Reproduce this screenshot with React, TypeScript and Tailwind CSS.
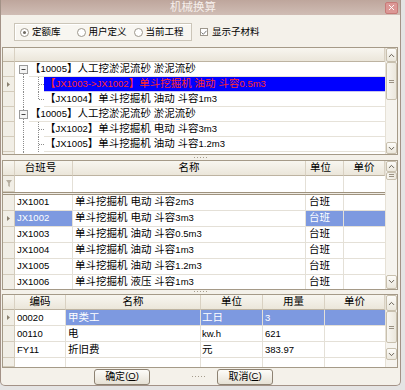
import { ChevronDown, ChevronUp, X } from 'lucide-react';

const sel = 'bg-[#7d99e0] text-white';
const cellLine = 'border-r border-b border-[#e4e0d7]';

// Latin runs are drawn a little smaller than the CJK ones, like the Tahoma + SimSun mix of the original
function T({ s }: { s: string }) {
  const parts = s.split(/([\x21-\x7e]+)/);
  return (
    <>
      {parts.map((p, i) =>
        /^[\x21-\x7e]+$/.test(p) ? (
          <span key={i} className="text-[9.5px]">
            {p}
          </span>
        ) : (
          p
        ),
      )}
    </>
  );
}

function Arrow({ dir, className }: { dir: 'up' | 'down'; className: string }) {
  return (
    <div
      className={`flex shrink-0 items-center justify-center rounded-[2px] border border-[#c8c0ae] bg-linear-to-b from-[#fdfcf9] to-[#ebe7dc] ${className}`}
    >
      {dir === 'up' ? (
        <ChevronUp size={9} strokeWidth={2.5} className="text-[#5e574c]" />
      ) : (
        <ChevronDown size={9} strokeWidth={2.5} className="text-[#5e574c]" />
      )}
    </div>
  );
}

function ScrollBar({ up, thumb, down }: { up: string; thumb: string; down: string }) {
  return (
    <div className="flex w-[12px] shrink-0 flex-col border-l border-[#e6e1d6] bg-[#f6f4ef]">
      <Arrow dir="up" className={up} />
      <div
        className={`flex shrink-0 flex-col items-center justify-center gap-[1px] rounded-[2px] border border-[#c8c0ae] bg-linear-to-r from-[#f8f6f1] to-[#ebe7dc] ${thumb}`}
      >
        <span className="h-px w-[5px] bg-[#9a9182]" />
        <span className="h-px w-[5px] bg-[#9a9182]" />
      </div>
      <div className="flex-1" />
      <Arrow dir="down" className={down} />
    </div>
  );
}

function Indicator({ mark, filter, className = 'h-[16px]' }: { mark?: boolean; filter?: boolean; className?: string }) {
  return (
    <div
      className={`flex w-[12px] shrink-0 items-center justify-center border-r border-b border-[#d3cbbb] bg-[#f1eee6] ${className}`}
    >
      {mark && (
        <svg width="3" height="5" viewBox="0 0 3 5">
          <polygon points="0,0 3,2.5 0,5" fill="#8a8070" />
        </svg>
      )}
      {filter && (
        <svg width="6" height="7" viewBox="0 0 6 7">
          <polygon points="0,0 6,0 3.8,3 3.8,7 2.2,6 2.2,3" fill="#b5ad9f" />
        </svg>
      )}
    </div>
  );
}

function Head({ w, children }: { w: string; children?: React.ReactNode }) {
  return (
    <div
      className={`flex shrink-0 items-center justify-center border-r border-b border-r-[#d9d1c2] border-b-[#bdb3a1] bg-linear-to-b from-[#f8f6f0] to-[#ebe6da] ${w}`}
    >
      {children}
    </div>
  );
}

function Dots() {
  return (
    <div className="flex gap-[2px]">
      {[0, 1, 2, 3, 4].map((i) => (
        <span key={i} className="h-px w-px bg-[#a59c8c]" />
      ))}
    </div>
  );
}

function Splitter() {
  return (
    <div className="flex h-[5px] items-center justify-center">
      <Dots />
    </div>
  );
}

function TreeLines({ kind }: { kind: 'parent-first' | 'parent' | 'child' | 'last' }) {
  if (kind === 'parent-first' || kind === 'parent') {
    return (
      <svg width="14" height="15" className="shrink-0">
        {kind === 'parent' && <line x1="8.5" y1="0" x2="8.5" y2="3" stroke="#8c8c8c" strokeDasharray="1 1" />}
        <line x1="8.5" y1="12" x2="8.5" y2="15" stroke="#8c8c8c" strokeDasharray="1 1" />
        <rect x="4.5" y="3.5" width="8" height="8" fill="#f4f4f4" stroke="#9a9a9a" />
        <line x1="6.5" y1="7.5" x2="10.5" y2="7.5" stroke="#444" />
      </svg>
    );
  }
  return (
    <svg width="29" height="15" className="shrink-0">
      <line x1="8.5" y1="0" x2="8.5" y2="15" stroke="#8c8c8c" strokeDasharray="1 1" />
      <line x1="23.5" y1="0" x2="23.5" y2={kind === 'last' ? 8 : 15} stroke="#8c8c8c" strokeDasharray="1 1" />
      <line x1="24" y1="7.5" x2="29" y2="7.5" stroke="#8c8c8c" strokeDasharray="1 1" />
    </svg>
  );
}

const treeRows: { kind: 'parent-first' | 'parent' | 'child' | 'last'; text: string; selected?: boolean }[] = [
  { kind: 'parent-first', text: '【10005】人工挖淤泥流砂 淤泥流砂' },
  { kind: 'child', text: '【JX1003->JX1002】单斗挖掘机 油动 斗容0.5m3', selected: true },
  { kind: 'last', text: '【JX1004】单斗挖掘机 油动 斗容1m3' },
  { kind: 'parent', text: '【10005】人工挖淤泥流砂 淤泥流砂' },
  { kind: 'child', text: '【JX1002】单斗挖掘机 电动 斗容3m3' },
  { kind: 'child', text: '【JX1005】单斗挖掘机 油动 斗容1.2m3' },
];

const machines = [
  ['JX1001', '单斗挖掘机 电动 斗容2m3'],
  ['JX1002', '单斗挖掘机 电动 斗容3m3'],
  ['JX1003', '单斗挖掘机 油动 斗容0.5m3'],
  ['JX1004', '单斗挖掘机 油动 斗容1m3'],
  ['JX1005', '单斗挖掘机 油动 斗容1.2m3'],
  ['JX1006', '单斗挖掘机 液压 斗容1m3'],
];

const materials = [
  ['00020', '甲类工', '工日', '3'],
  ['00110', '电', 'kw.h', '621'],
  ['FY11', '折旧费', '元', '383.97'],
];

function Radio({ checked, label, className }: { checked?: boolean; label: string; className: string }) {
  return (
    <div className={`flex items-center ${className}`}>
      <span className="flex h-[9px] w-[9px] items-center justify-center rounded-full border border-[#9d978c] bg-white">
        {checked && <span className="h-[3px] w-[3px] rounded-full bg-[#6f6a62]" />}
      </span>
      <span className="ml-[3px]">{label}</span>
    </div>
  );
}

export default function App() {
  return (
    <div className="h-[390px] w-[405px] overflow-hidden bg-[#e4e4e4] text-black [font-family:'Liberation_Sans','Noto_Sans_CJK_SC',sans-serif]">
      <div className="flex h-[386px] w-[401px] flex-col overflow-hidden rounded-b-[5px] border-x border-b border-[#a39287] bg-[#f4f1ea]">
        {/* Title bar */}
        <div className="flex h-[15px] shrink-0 items-center bg-linear-to-b from-[#bea69c] to-[#d0bdb5]">
          <div className="flex-1 text-center text-[11.5px] leading-none text-[#f6efeb]">机械换算</div>
          <div className="mr-[2px] flex h-[12px] w-[13px] items-center justify-center rounded-[2px] border border-[#c77a78] bg-[#dc9896]">
            <X size={9} strokeWidth={2.5} className="text-white" />
          </div>
        </div>

        {/* Options */}
        <div className="mt-[8px] flex h-[18px] shrink-0 items-center text-[9.5px]">
          <div className="ml-[13px] flex h-[18px] w-[178px] items-center border border-[#cbc5b8] bg-[#f8f6f1] shadow-[inset_1px_1px_0_#fff]">
            <Radio checked label="定额库" className="ml-[5px]" />
            <Radio label="用户定义" className="ml-[16px]" />
            <Radio label="当前工程" className="ml-[7px]" />
          </div>
          <div className="ml-[8px] flex items-center">
            <span className="flex h-[8px] w-[8px] items-center justify-center border border-[#9d978c] bg-white">
              <svg width="6" height="5" viewBox="0 0 6 5">
                <polyline points="0.5,2.5 2.3,4.3 5.5,0.8" fill="none" stroke="#777" strokeWidth="1" />
              </svg>
            </span>
            <span className="ml-[4px]">显示子材料</span>
          </div>
        </div>

        {/* Tree grid */}
        <div className="mt-[6px] ml-px flex h-[108px] w-[396px] shrink-0 border border-[#a59a88] bg-white text-[10.5px]">
          <div className="flex flex-1 flex-col overflow-hidden">
            <div className="flex h-[14px] shrink-0">
              <Head w="w-[12px] border-r-[#d3cbbb]" />
              <Head w="flex-1" />
            </div>
            {treeRows.map((r, i) => (
              <div key={i} className="flex h-[15px] shrink-0">
                <Indicator mark={r.selected} className="h-[15px]" />
                <TreeLines kind={r.kind} />
                <div
                  className={`flex flex-1 items-center border-b pl-px whitespace-nowrap ${
                    r.selected ? 'border-[#c9c5ee] bg-[#0000ff] text-[#ff2a2a]' : 'border-[#e6e2d9]'
                  }`}
                >
                  <span>
                    <T s={r.text} />
                  </span>
                </div>
              </div>
            ))}
            <div className="flex flex-1">
              <Indicator className="h-full" />
              <svg width="14" height="3" className="shrink-0">
                <line x1="8.5" y1="0" x2="8.5" y2="3" stroke="#8c8c8c" strokeDasharray="1 1" />
              </svg>
            </div>
          </div>
          <ScrollBar up="h-[14px]" thumb="h-[38px]" down="h-[12px]" />
        </div>

        <Splitter />

        {/* Machine grid */}
        <div className="ml-px flex h-[130px] w-[396px] shrink-0 border border-[#a59a88] bg-white text-[10.5px]">
          <div className="flex flex-1 flex-col overflow-hidden">
            <div className="flex h-[15px] shrink-0">
              <Head w="w-[12px] border-r-[#d3cbbb]" />
              <Head w="w-[58px] pr-[6px]">台班号</Head>
              <Head w="w-[233px]">名称</Head>
              <Head w="w-[38px] pr-[8px]">单位</Head>
              <Head w="w-[41px]">单价</Head>
            </div>
            <div className="flex h-[16px] shrink-0">
              <Indicator filter />
              <div className="w-[58px] border-r border-[#e4e0d7]" />
              <div className="w-[233px] border-r border-[#e4e0d7]" />
              <div className="w-[38px] border-r border-[#e4e0d7]" />
              <div className="w-[41px]" />
            </div>
            <div className="h-[3px] shrink-0 border-y border-[#9e927e] bg-[#efebe3]" />
            {machines.map(([code, name], i) => {
              const s = i === 1;
              return (
                <div key={code} className="flex h-[16px] shrink-0">
                  <Indicator mark={s} />
                  <div className={`flex w-[58px] items-center pl-[2px] ${cellLine} ${s ? sel : ''}`}>
                    <span>
                      <T s={code} />
                    </span>
                  </div>
                  <div className={`flex w-[233px] items-center pl-[2px] whitespace-nowrap ${cellLine}`}>
                    <span>
                      <T s={name} />
                    </span>
                  </div>
                  <div className={`flex w-[38px] items-center pl-[3px] ${cellLine} ${s ? sel : ''}`}>台班</div>
                  <div className={`w-[41px] border-b border-[#e4e0d7] ${s ? sel : ''}`} />
                </div>
              );
            })}
          </div>
          <ScrollBar up="h-[11px]" thumb="h-[8px]" down="h-[14px]" />
        </div>

        <Splitter />

        {/* Material grid */}
        <div className="ml-px flex h-[74px] w-[396px] shrink-0 border border-[#a59a88] bg-white text-[10.5px]">
          <div className="flex flex-1 flex-col overflow-hidden">
            <div className="flex h-[15px] shrink-0">
              <Head w="w-[12px] border-r-[#d3cbbb]" />
              <Head w="w-[51px]">编码</Head>
              <Head w="w-[135px]">名称</Head>
              <Head w="w-[62px]">单位</Head>
              <Head w="w-[62px]">用量</Head>
              <Head w="w-[60px]">单价</Head>
            </div>
            {materials.map(([code, name, unit, qty], i) => {
              const s = i === 0;
              return (
                <div key={code} className="flex h-[16px] shrink-0">
                  <Indicator mark={s} />
                  <div className={`flex w-[51px] items-center pl-[2px] ${cellLine}`}>
                    <span>
                      <T s={code} />
                    </span>
                  </div>
                  <div className={`flex w-[135px] items-center pl-[2px] ${cellLine} ${s ? sel : ''}`}>{name}</div>
                  <div className={`flex w-[62px] items-center pl-[1px] ${cellLine} ${s ? sel : ''}`}>
                    <span>
                      <T s={unit} />
                    </span>
                  </div>
                  <div className={`flex w-[62px] items-center pl-[2px] ${cellLine} ${s ? sel : ''}`}>
                    <span>
                      <T s={qty} />
                    </span>
                  </div>
                  <div className={`w-[60px] border-b border-[#e4e0d7] ${s ? sel : ''}`} />
                </div>
              );
            })}
            <div className="flex flex-1">
              <Indicator className="h-full" />
              <div className="w-[51px] border-r border-[#e4e0d7]" />
              <div className="w-[135px] border-r border-[#e4e0d7]" />
              <div className="w-[62px] border-r border-[#e4e0d7]" />
              <div className="w-[62px] border-r border-[#e4e0d7]" />
            </div>
          </div>
          <ScrollBar up="h-[16px]" thumb="h-[32px]" down="h-[12px] mb-[7px]" />
        </div>

        {/* Buttons */}
        <div className="flex h-[17px] shrink-0 items-center text-[10px]">
          <button className="ml-[93px] flex h-[16px] w-[56px] items-center justify-center rounded-[3px] border border-[#8d8272] bg-linear-to-b from-[#fdfcf9] to-[#e6e1d5]">
            确定<span className="text-[9.5px]">(<span className="underline">O</span>)</span>
          </button>
          <div className="ml-[42px]">
            <Dots />
          </div>
          <button className="ml-[12px] flex h-[16px] w-[56px] items-center justify-center rounded-[3px] border border-[#8d8272] bg-linear-to-b from-[#fdfcf9] to-[#e6e1d5]">
            取消<span className="text-[9.5px]">(<span className="underline">C</span>)</span>
          </button>
        </div>
      </div>
    </div>
  );
}
